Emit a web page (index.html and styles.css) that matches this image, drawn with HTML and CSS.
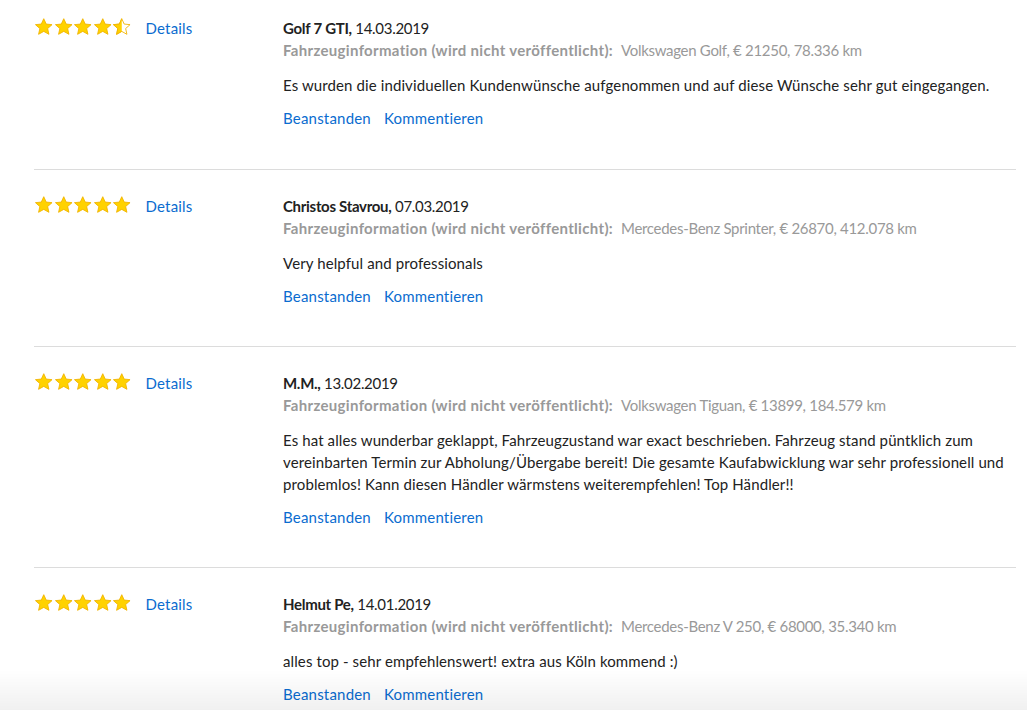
FILE: index.html
```html
<!DOCTYPE html>
<html lang="de">
<head>
<meta charset="utf-8">
<title>Bewertungen</title>
<link rel="stylesheet" href="styles.css">
</head>
<body>
<svg width="0" height="0" class="defs">
  <defs>
    <symbol id="star" viewBox="0 0 20 19">
      <path d="M10 1.5 L12.5 7 L18.5 7.6 L14 11.6 L15.3 17.5 L10 14.5 L4.7 17.5 L6 11.6 L1.5 7.6 L7.5 7 Z" fill="#ffd200" stroke="#f0b400" stroke-width="0.9" stroke-linejoin="round"/>
    </symbol>
    <symbol id="halfstar" viewBox="0 0 20 19">
      <clipPath id="lefthalf"><rect x="0" y="0" width="10" height="19"/></clipPath>
      <path d="M10 1.5 L12.5 7 L18.5 7.6 L14 11.6 L15.3 17.5 L10 14.5 L4.7 17.5 L6 11.6 L1.5 7.6 L7.5 7 Z" fill="#fff" stroke="#f0b400" stroke-width="0.9" stroke-linejoin="round"/>
      <path clip-path="url(#lefthalf)" d="M10 1.5 L12.5 7 L18.5 7.6 L14 11.6 L15.3 17.5 L10 14.5 L4.7 17.5 L6 11.6 L1.5 7.6 L7.5 7 Z" fill="#ffd200" stroke="#f0b400" stroke-width="0.9" stroke-linejoin="round"/>
    </symbol>
  </defs>
</svg>
<main class="reviews">
  <article class="review">
    <div class="meta">
      <div class="stars">
        <svg class="star"><use href="#star"/></svg><svg class="star"><use href="#star"/></svg><svg class="star"><use href="#star"/></svg><svg class="star"><use href="#star"/></svg><svg class="star"><use href="#halfstar"/></svg>
      </div>
      <a class="link" href="#">Details</a>
    </div>
    <div class="body">
      <div class="title"><b>Golf 7 GTI,</b> 14.03.2019</div>
      <div class="vehicle"><b>Fahrzeuginformation (wird nicht veröffentlicht):</b><span class="vval">Volkswagen Golf, € 21250, 78.336 km</span></div>
      <p class="text">Es wurden die individuellen Kundenwünsche aufgenommen und auf diese Wünsche sehr gut eingegangen.</p>
      <div class="actions"><a class="link" href="#">Beanstanden</a><a class="link" href="#">Kommentieren</a></div>
    </div>
  </article>
  <article class="review">
    <div class="meta">
      <div class="stars">
        <svg class="star"><use href="#star"/></svg><svg class="star"><use href="#star"/></svg><svg class="star"><use href="#star"/></svg><svg class="star"><use href="#star"/></svg><svg class="star"><use href="#star"/></svg>
      </div>
      <a class="link" href="#">Details</a>
    </div>
    <div class="body">
      <div class="title"><b>Christos Stavrou,</b> 07.03.2019</div>
      <div class="vehicle"><b>Fahrzeuginformation (wird nicht veröffentlicht):</b><span class="vval">Mercedes-Benz Sprinter, € 26870, 412.078 km</span></div>
      <p class="text">Very helpful and professionals</p>
      <div class="actions"><a class="link" href="#">Beanstanden</a><a class="link" href="#">Kommentieren</a></div>
    </div>
  </article>
  <article class="review">
    <div class="meta">
      <div class="stars">
        <svg class="star"><use href="#star"/></svg><svg class="star"><use href="#star"/></svg><svg class="star"><use href="#star"/></svg><svg class="star"><use href="#star"/></svg><svg class="star"><use href="#star"/></svg>
      </div>
      <a class="link" href="#">Details</a>
    </div>
    <div class="body">
      <div class="title"><b>M.M.,</b> 13.02.2019</div>
      <div class="vehicle"><b>Fahrzeuginformation (wird nicht veröffentlicht):</b><span class="vval">Volkswagen Tiguan, € 13899, 184.579 km</span></div>
      <p class="text">Es hat alles wunderbar geklappt, Fahrzeugzustand war exact beschrieben. Fahrzeug stand püntklich zum vereinbarten Termin zur Abholung/Übergabe bereit! Die gesamte Kaufabwicklung war sehr professionell und problemlos! Kann diesen Händler wärmstens weiterempfehlen! Top Händler!!</p>
      <div class="actions"><a class="link" href="#">Beanstanden</a><a class="link" href="#">Kommentieren</a></div>
    </div>
  </article>
  <article class="review">
    <div class="meta">
      <div class="stars">
        <svg class="star"><use href="#star"/></svg><svg class="star"><use href="#star"/></svg><svg class="star"><use href="#star"/></svg><svg class="star"><use href="#star"/></svg><svg class="star"><use href="#star"/></svg>
      </div>
      <a class="link" href="#">Details</a>
    </div>
    <div class="body">
      <div class="title"><b>Helmut Pe,</b> 14.01.2019</div>
      <div class="vehicle"><b>Fahrzeuginformation (wird nicht veröffentlicht):</b><span class="vval">Mercedes-Benz V 250, € 68000, 35.340 km</span></div>
      <p class="text">alles top - sehr empfehlenswert! extra aus Köln kommend :)</p>
      <div class="actions"><a class="link" href="#">Beanstanden</a><a class="link" href="#">Kommentieren</a></div>
    </div>
  </article>
</main>
<div class="fade"></div>
</body>
</html>
```
FILE: styles.css
```css
html, body {
  margin: 0;
  padding: 0;
  background: #fff;
  overflow: hidden;
}
body {
  font-family: "Lato", "Open Sans", sans-serif;
  font-size: 15px;
  line-height: 22px;
  color: #222;
}
.defs {
  position: absolute;
  width: 0;
  height: 0;
}
.reviews {
  margin: 0 11px 0 34px;
}
.review {
  display: flex;
  padding: 25px 0 39px;
  border-bottom: 1px solid #dcdcdc;
}
.review:first-child {
  padding-top: 17px;
  padding-bottom: 40px;
}
.meta {
  width: 249px;
  flex: none;
  display: flex;
  align-items: flex-start;
  gap: 14px;
}
.stars {
  display: flex;
  height: 22px;
  align-items: center;
  margin-top: -2px;
}
.star {
  width: 19.5px;
  height: 19px;
  display: block;
}
.link {
  color: #0a6ccf;
  text-decoration: none;
  letter-spacing: 0.2px;
}
.body {
  flex: 1;
  min-width: 0;
}
.title {
  letter-spacing: -0.3px;
  color: #222;
}
.title b {
  font-weight: 700;
}
.vehicle {
  color: #999;
}
.vehicle b {
  font-weight: 700;
  letter-spacing: 0.32px;
}
.vval {
  margin-left: 8px;
  letter-spacing: -0.3px;
}
.text {
  margin: 13px 0 0;
  line-height: 22px;
  letter-spacing: 0.11px;
}
.actions {
  margin-top: 11px;
  display: flex;
  gap: 13px;
}
.fade {
  position: fixed;
  left: 0;
  right: 0;
  bottom: 0;
  height: 40px;
  background: linear-gradient(to bottom, rgba(0,0,0,0), rgba(0,0,0,0.06));
  pointer-events: none;
}
```
